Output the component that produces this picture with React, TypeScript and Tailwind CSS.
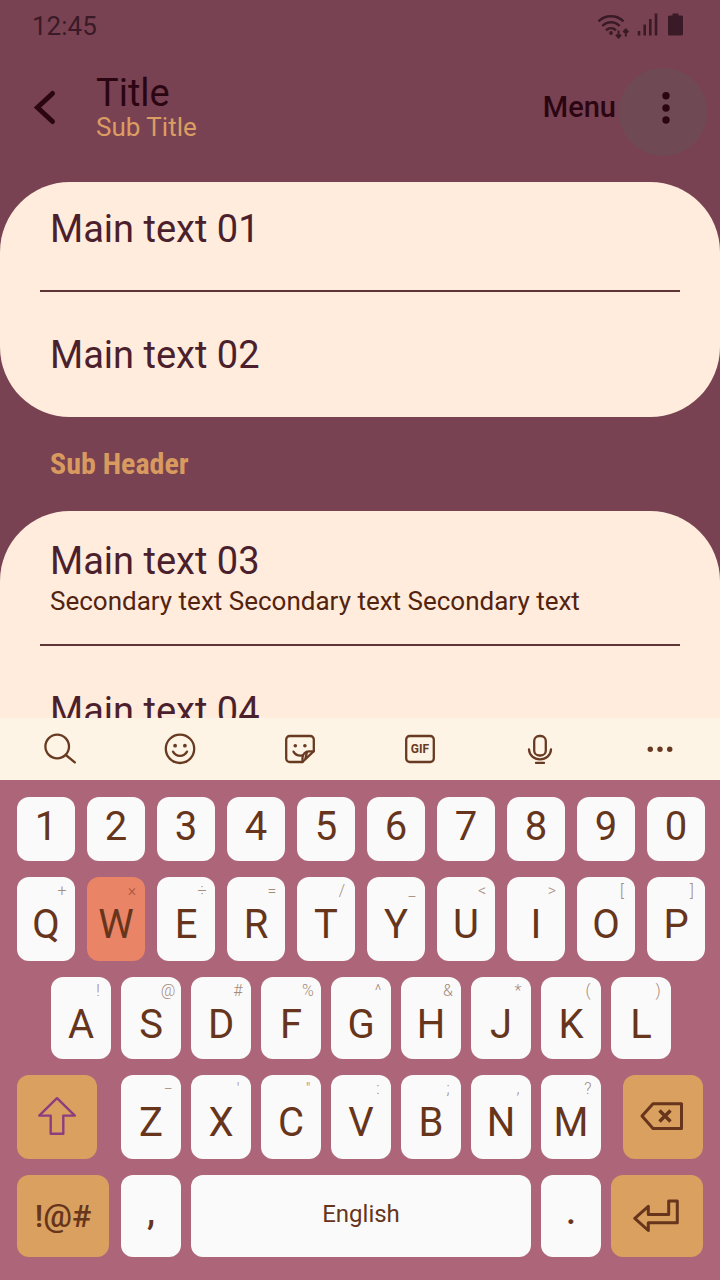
import React from 'react';

type KeyDef = { label: string; hint?: string; active?: boolean };

const numberRow = ['1', '2', '3', '4', '5', '6', '7', '8', '9', '0'];

const topRow: KeyDef[] = [
  { label: 'Q', hint: '+' },
  { label: 'W', hint: '×', active: true },
  { label: 'E', hint: '÷' },
  { label: 'R', hint: '=' },
  { label: 'T', hint: '/' },
  { label: 'Y', hint: '_' },
  { label: 'U', hint: '<' },
  { label: 'I', hint: '>' },
  { label: 'O', hint: '[' },
  { label: 'P', hint: ']' },
];

const homeRow: KeyDef[] = [
  { label: 'A', hint: '!' },
  { label: 'S', hint: '@' },
  { label: 'D', hint: '#' },
  { label: 'F', hint: '%' },
  { label: 'G', hint: '^' },
  { label: 'H', hint: '&' },
  { label: 'J', hint: '*' },
  { label: 'K', hint: '(' },
  { label: 'L', hint: ')' },
];

const bottomRow: KeyDef[] = [
  { label: 'Z', hint: '−' },
  { label: 'X', hint: "'" },
  { label: 'C', hint: '"' },
  { label: 'V', hint: ':' },
  { label: 'B', hint: ';' },
  { label: 'N', hint: ',' },
  { label: 'M', hint: '?' },
];

const tools = [
  {
    name: 'Search',
    icon: (
      <>
        <circle cx="15.2" cy="15.5" r="11.8" />
        <path d="M23.8 24L32.8 31.4" />
      </>
    ),
  },
  {
    name: 'Emoji',
    icon: (
      <>
        <circle cx="18" cy="17.8" r="14.2" />
        <path d="M11 20.6c1.6 2.9 4.1 4.2 7 4.2s5.4-1.3 7-4.2" />
        <circle cx="13.1" cy="14.7" r="1.9" fill="currentColor" stroke="none" />
        <circle cx="22.9" cy="14.7" r="1.9" fill="currentColor" stroke="none" />
      </>
    ),
  },
  {
    name: 'Stickers',
    icon: (
      <>
        <path d="M20.5 31H7.7a3.5 3.5 0 0 1-3.5-3.5V8.5A3.5 3.5 0 0 1 7.7 5h20.6a3.5 3.5 0 0 1 3.5 3.5V20.2z" />
        <path d="M31.5 20.4h-4.5a6.5 6.5 0 0 0-6.5 6.5V31" />
        <path d="M25 21l-1.5 6" />
        <path d="M11.5 20.6c1.8 3.2 4.8 4.4 8.8 3.8" />
        <circle cx="13.3" cy="14.7" r="1.8" fill="currentColor" stroke="none" />
        <circle cx="22.9" cy="14.7" r="1.8" fill="currentColor" stroke="none" />
      </>
    ),
  },
  {
    name: 'GIF',
    icon: (
      <>
        <rect x="4.2" y="5" width="27.6" height="26" rx="3.5" />
        <text x="18" y="22.3" textAnchor="middle" fill="currentColor" stroke="none" fontSize="12" fontWeight="700">
          GIF
        </text>
      </>
    ),
  },
  {
    name: 'Voice input',
    icon: (
      <>
        <rect x="12.2" y="5" width="11.6" height="19.5" rx="5" />
        <path d="M7 18.5c.4 6 5 9.9 11 9.9s10.6-3.9 11-9.9" />
        <path d="M14 31.9h8" />
      </>
    ),
  },
  {
    name: 'More tools',
    icon: (
      <g fill="currentColor" stroke="none">
        <circle cx="8.3" cy="18.3" r="2.7" />
        <circle cx="18" cy="18.3" r="2.7" />
        <circle cx="27.7" cy="18.3" r="2.7" />
      </g>
    ),
  },
];

function LetterKey({ label, hint, active }: KeyDef) {
  return (
    <button
      type="button"
      className={`flex min-w-0 flex-1 flex-col items-center justify-start rounded-xl ${active ? 'bg-[#ea8467]' : 'bg-[#fafafa]'}`}
    >
      <span className={`w-[26px] self-end text-center text-base leading-7 font-light ${active ? 'text-[#a5573a]' : 'text-[#a58b7b]'}`}>
        {hint}
      </span>
      <span className="text-[40px] leading-10">{label}</span>
    </button>
  );
}

function StatusBar() {
  return (
    <div className="flex h-[52px] shrink-0 items-center justify-between pl-8 pr-9 text-[#3a1a27]">
      <span className="text-[26px] leading-[52px]">12:45</span>
      <svg width="88" height="28" viewBox="0 0 88 28" fill="none" stroke="currentColor" strokeWidth="2.4" aria-label="Network and battery">
        <path d="M2.5 9.3C9.5 2.6 20.5 2.6 27.5 9.3" />
        <path d="M6.3 14C11.5 9 18.5 9 23.7 14" />
        <path d="M10 18.3c3-2.7 7-2.7 10 0" />
        <circle cx="15" cy="21" r="1.9" fill="currentColor" stroke="none" />
        <path d="M22.5 18.5V25M20 22.8l2.5 2.7 2.5-2.7M29.8 24.5V18M27.3 20.2l2.5-2.7 2.5 2.7" strokeWidth="2" />
        <path d="M43 19v4.5M48.7 12.5v11M54.3 7v16.5M60 1.5v22" strokeWidth="2.6" />
        <path d="M76.5 1.5h6v2h3a1.5 1.5 0 0 1 1.5 1.5v17a1.5 1.5 0 0 1-1.5 1.5h-12a1.5 1.5 0 0 1-1.5-1.5V5a1.5 1.5 0 0 1 1.5-1.5h3z" fill="currentColor" stroke="none" />
      </svg>
    </div>
  );
}

function Header() {
  return (
    <header className="flex shrink-0 items-start pt-4 pb-[26px] pl-6 pr-[13px] text-[#2b0612]">
      <button type="button" aria-label="Back" className="flex h-20 w-[72px] items-center">
        <svg width="40" height="40" viewBox="0 0 40 40" fill="none" stroke="currentColor" strokeWidth="5" strokeLinecap="round">
          <path d="M28.5 5.5L13.5 19.5 28.5 33.5" />
        </svg>
      </button>
      <div className="flex h-20 flex-1 flex-col justify-center">
        <h1 className="text-[38px] leading-[38px]">Title</h1>
        <p className="text-[26px] leading-[30px] text-[#dc9d62]">Sub Title</p>
      </div>
      <button type="button" className="h-20 px-[3px] text-[29px] font-medium">
        Menu
      </button>
      <button type="button" aria-label="More options" className="size-[88px] rounded-full bg-[#6f4a54]">
        <svg width="88" height="88" viewBox="0 0 88 88" fill="currentColor">
          <circle cx="47" cy="27.7" r="3.7" />
          <circle cx="47" cy="40" r="3.7" />
          <circle cx="47" cy="52" r="3.7" />
        </svg>
      </button>
    </header>
  );
}

export default function App() {
  return (
    <div className="flex h-screen flex-col overflow-hidden bg-[#784252] font-['Roboto','Liberation_Sans',sans-serif]">
      <StatusBar />
      <Header />

      {/* Settings list, runs on behind the keyboard */}
      <main className="min-h-0 flex-1 overflow-hidden text-[38px] leading-11 text-[#4b1f2c]">
        <ul className="rounded-[70px] bg-[#ffecdd]">
          <li className="px-[50px] pt-[25px] pb-[39px]">Main text 01</li>
          <li className="mx-10 h-0.5 bg-[#5f3434]" role="separator" />
          <li className="px-[50px] pt-[41px] pb-10">Main text 02</li>
        </ul>
        <h2 className="px-[50px] py-[29px] font-['Roboto_Condensed','Roboto',sans-serif] text-[30px] leading-9 font-bold text-[#d89a5f]">
          Sub Header
        </h2>
        <ul className="rounded-t-[70px] bg-[#ffecdd]">
          <li className="px-[50px] pt-7 pb-[25px]">
            <div>Main text 03</div>
            <div className="text-[26px] leading-9 text-[#52230f]">
              Secondary text Secondary text Secondary text
            </div>
          </li>
          <li className="mx-10 h-0.5 bg-[#5f3434]" role="separator" />
          <li className="px-[50px] pt-[43px] pb-10">Main text 04</li>
        </ul>
      </main>

      {/* Keyboard toolbar */}
      <div className="flex h-[62px] shrink-0 bg-[#fdf4e5] text-[#693a22]">
        {tools.map((tool) => (
          <button key={tool.name} type="button" aria-label={tool.name} className="flex flex-1 items-center justify-center">
            <svg width="36" height="36" viewBox="0 0 36 36" fill="none" stroke="currentColor" strokeWidth="2.3" strokeLinecap="round" strokeLinejoin="round">
              {tool.icon}
            </svg>
          </button>
        ))}
      </div>

      {/* Keys */}
      <div className="flex shrink-0 flex-col gap-4 bg-[#ad6679] pt-[17px] pr-[15px] pb-[23px] pl-[17px] text-[#66351c]">
        <div className="flex h-16 gap-3">
          {numberRow.map((n) => (
            <button key={n} type="button" className="flex min-w-0 flex-1 justify-center rounded-xl bg-[#fafafa] pt-2.5 text-[40px] leading-10">
              {n}
            </button>
          ))}
        </div>
        <div className="flex h-[84px] gap-3">
          {topRow.map((k) => (
            <LetterKey key={k.label} {...k} />
          ))}
        </div>
        <div className="flex h-[82px] gap-2.5 px-[34px]">
          {homeRow.map((k) => (
            <LetterKey key={k.label} {...k} />
          ))}
        </div>
        <div className="flex h-[84px] pr-0.5">
          <button type="button" aria-label="Shift" className="mr-6 flex w-20 items-center justify-center rounded-xl bg-[#d9a060] text-[#8b3d80]">
            <svg width="44" height="44" viewBox="0 0 44 44" fill="none" stroke="currentColor" strokeWidth="2.4" strokeLinejoin="round">
              <path d="M22 3.2L39.8 20.6H28.3V38.7H15.7V20.6H4.2z" />
            </svg>
          </button>
          <div className="flex flex-1 gap-2.5">
            {bottomRow.map((k) => (
              <LetterKey key={k.label} {...k} />
            ))}
          </div>
          <button type="button" aria-label="Backspace" className="ml-[22px] flex w-20 items-center justify-center rounded-xl bg-[#d9a060]">
            <svg width="48" height="48" viewBox="0 0 48 48" fill="none" stroke="currentColor" strokeWidth="3" strokeLinejoin="round">
              <path d="M3 23L14 10.7H42.5V35.4H14z" />
              <path d="M20.5 17.5l11 11M31.5 17.5l-11 11" strokeWidth="3.4" />
            </svg>
          </button>
        </div>
        <div className="flex h-[82px] gap-2.5 pr-0.5">
          <button type="button" className="mr-0.5 w-[92px] rounded-xl bg-[#d9a060] text-[32px] font-medium">
            !@#
          </button>
          <button type="button" className="w-15 rounded-xl bg-[#fafafa] pb-2 text-[36px] font-medium">,</button>
          <button type="button" className="flex-1 rounded-xl bg-[#fafafa] pb-1 text-2xl">English</button>
          <button type="button" className="w-15 rounded-xl bg-[#fafafa] pb-2 text-[36px] font-medium">.</button>
          <button type="button" aria-label="Enter" className="flex w-[92px] items-center justify-center rounded-xl bg-[#d9a060]">
            <svg width="48" height="48" viewBox="0 0 48 48" fill="none" stroke="currentColor" strokeWidth="3" strokeLinejoin="round">
              <path d="M1.8 26.3L15.3 14.3V22.5H35.7V8.9H44.3V30.7H15.3V38.5z" />
            </svg>
          </button>
        </div>
      </div>
    </div>
  );
}
